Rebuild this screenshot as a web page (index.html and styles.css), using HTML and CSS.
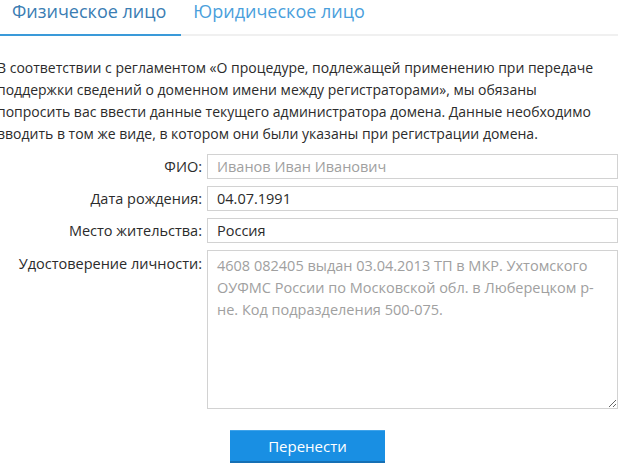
FILE: index.html
```html
<!DOCTYPE html>
<html lang="ru">
<head>
    <meta charset="UTF-8">
    <meta name="viewport" content="width=device-width, initial-scale=1.0">
    <title>Перенос домена</title>
    <link rel="stylesheet" href="styles.css">
</head>
<body>
    <div class="tabs">
        <a class="tab active" href="#">Физическое лицо</a>
        <a class="tab" href="#">Юридическое лицо</a>
    </div>
    <p class="intro">В соответствии с регламентом «О процедуре, подлежащей применению при передаче<br>
        поддержки сведений о доменном имени между регистраторами», мы обязаны<br>
        попросить вас ввести данные текущего администратора домена. Данные необходимо<br>
        вводить в том же виде, в котором они были указаны при регистрации домена.</p>
    <form class="form">
        <label class="label" for="fio">ФИО:</label>
        <input class="field" id="fio" type="text" placeholder="Иванов Иван Иванович">

        <label class="label" for="birth">Дата рождения:</label>
        <input class="field" id="birth" type="text" value="04.07.1991">

        <label class="label" for="place">Место жительства:</label>
        <input class="field" id="place" type="text" value="Россия">

        <label class="label label-top" for="doc">Удостоверение личности:</label>
        <textarea class="field area" id="doc" placeholder="4608 082405 выдан 03.04.2013 ТП в МКР. Ухтомского&#10;ОУФМС России по Московской обл. в Люберецком р-&#10;не. Код подразделения 500-075."></textarea>

        <div class="actions">
            <button type="submit" class="submit">Перенести</button>
        </div>
    </form>
</body>
</html>
```

FILE: styles.css
```css
body {
    margin: 0;
    font-family: "Open Sans", Arial, sans-serif;
    font-size: 14px;
    color: #2b2b2b;
    background: #fff;
    width: 618px;
}
.tabs {
    display: flex;
    height: 34px;
    border-bottom: 2px solid #f0f0f0;
}
.tab {
    padding: 0 15px 0 12px;
    font-size: 18px;
    line-height: 22px;
    color: #4a9fdc;
    text-decoration: none;
}
.tab.active {
    color: #3a7db3;
    border-bottom: 2px solid #3a9ad9;
    margin-bottom: -2px;
}
.intro {
    margin: 21px 0 9px -3px;
    line-height: 22px;
    white-space: nowrap;
}
.form {
    display: grid;
    grid-template-columns: 202px 1fr;
    column-gap: 5px;
    row-gap: 7px;
}
.label {
    text-align: right;
    align-self: center;
    white-space: nowrap;
    font-size: 14.5px;
}
.label-top {
    align-self: start;
    padding-top: 4px;
}
.field {
    box-sizing: border-box;
    height: 25px;
    margin: 0;
    padding: 0 9px;
    border: 1px solid #d2d2d2;
    border-radius: 0;
    font: inherit;
    font-size: 14.5px;
    color: #2b2b2b;
    outline: none;
}
.field::placeholder {
    color: #a0a0a0;
}
.area {
    height: 159px;
    padding: 4px 9px;
    line-height: 22px;
    resize: vertical;
}
.actions {
    grid-column: 2;
    padding: 14px 0 0 23px;
}
.submit {
    width: 155px;
    height: 33px;
    border: none;
    border-top: 1px solid #3fa3ea;
    border-bottom: 2px solid #1670b4;
    background: #198fe3;
    color: #fff;
    font: inherit;
    font-size: 15px;
    cursor: pointer;
}
```
